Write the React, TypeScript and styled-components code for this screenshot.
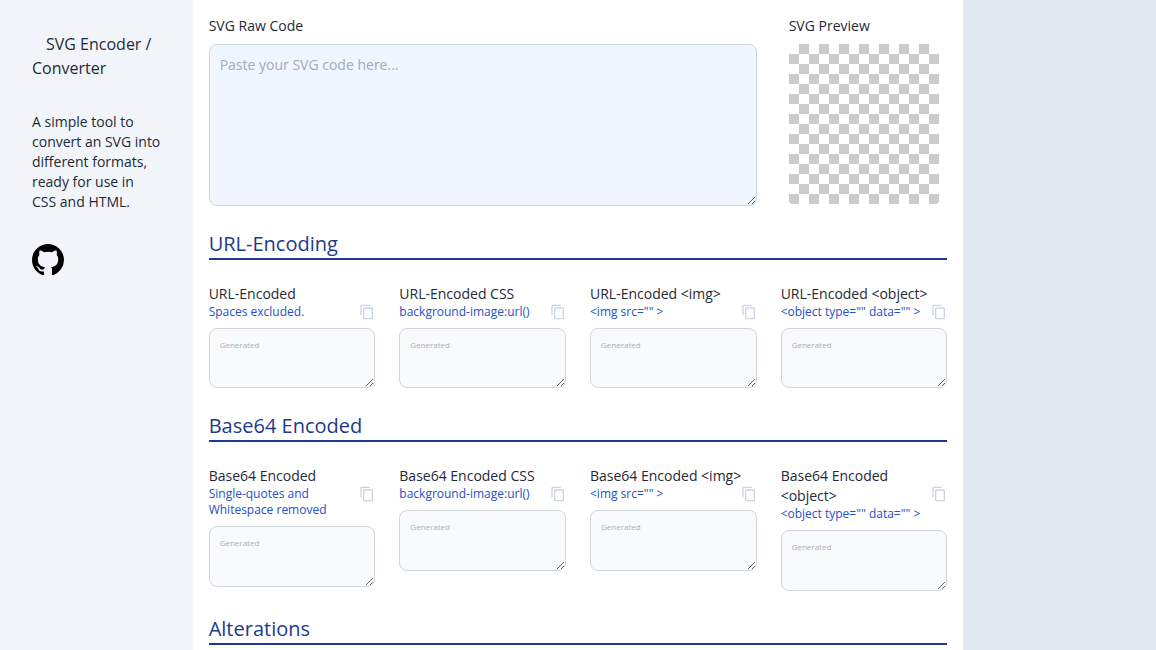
import React, { FunctionComponent } from 'react';
import styled, { createGlobalStyle } from 'styled-components';
import { MdOutlineContentCopy } from 'react-icons/md';

const GlobalStyle = createGlobalStyle`
	html, body {
		margin: 0;
		height: 100%;
		overflow: hidden;
	}
	body {
		font-family: 'Open Sans', 'Liberation Sans', sans-serif;
		color: #1f2937;
	}
	* {
		box-sizing: border-box;
	}
`;

const Page = styled.div`
	display: grid;
	grid-template-columns: 1fr 4fr 1fr;
	height: 650px;
	overflow: hidden;
	background: #e2e8f0;
`;
const Sidebar = styled.aside`
	background: #f1f5f9;
	padding: 32px;
`;
const AppTitle = styled.h1`
	margin: 0 0 32px;
	font-size: 16px;
	line-height: 24px;
	font-weight: 400;
	text-indent: 14px;
`;
const Intro = styled.p`
	margin: 0 0 32px;
	font-size: 14px;
	line-height: 20px;
`;
const GithubLink = styled.a`
	display: block;
	width: 32px;
	height: 32px;
	color: #000;
	line-height: 0;
`;
const Main = styled.main`
	background: #fff;
	padding: 16px;
`;
const Grid = styled.div`
	display: grid;
	grid-template-columns: repeat(4, 1fr);
	column-gap: 24px;
	align-items: start;
	margin-bottom: 24px;
`;
const RawField = styled.div`
	grid-column: span 3;
`;
const PreviewField = styled.div`
	padding-left: 8px;
`;
const Label = styled.label`
	display: block;
	font-size: 14px;
	line-height: 20px;
`;
const TopLabel = styled(Label)`
	margin-bottom: 8px;
`;
const RawInput = styled.textarea`
	display: block;
	width: 100%;
	height: 162px;
	padding: 10px;
	background: #eff6ff;
	border: 1px solid #cbd5e1;
	border-radius: 8px;
	font-family: inherit;
	font-size: 14px;
	line-height: 20px;

	&::placeholder {
		color: #a3aab5;
		opacity: 1;
	}
`;
const Preview = styled.div`
	width: 150px;
	height: 160px;
	border-radius: 4px;
	background-color: #fff;
	background-image: conic-gradient(#ccc 25%, #fff 0 50%, #ccc 0 75%, #fff 0);
	background-size: 20px 20px;
`;
const SectionTitle = styled.h2`
	margin: 0 0 24px;
	font-size: 20px;
	line-height: 28px;
	font-weight: 400;
	color: #1e3a8a;
	border-bottom: 2px solid #1e3a8a;
`;
const OutputCell = styled.div`
	position: relative;
`;
const Hint = styled.div`
	padding-right: 24px;
	margin-bottom: 8px;
	font-size: 12px;
	line-height: 16px;
	color: #2250c8;
`;
const CopyButton = styled.button`
	position: absolute;
	top: 20px;
	right: 0;
	width: 16px;
	height: 16px;
	padding: 0;
	border: 0;
	background: none;
	color: #cbd5e1;
	font-size: 16px;
	line-height: 0;
`;
const OutputBox = styled.textarea`
	display: block;
	width: 100%;
	height: 60.25px;
	padding: 10px;
	background: #f8fafc;
	border: 1px solid #d1d5db;
	border-radius: 8px;
	font-family: inherit;
	font-size: 8px;
	line-height: 12px;

	&::placeholder {
		color: #a9afb9;
		opacity: 1;
	}
`;

interface Output {
	label: string;
	hint: string;
}

const urlOutputs: Output[] = [
	{ label: 'URL-Encoded', hint: 'Spaces excluded.' },
	{ label: 'URL-Encoded CSS', hint: 'background-image:url()' },
	{ label: 'URL-Encoded <img>', hint: '<img src="" >' },
	{ label: 'URL-Encoded <object>', hint: '<object type="" data="" >' },
];

const base64Outputs: Output[] = [
	{ label: 'Base64 Encoded', hint: 'Single-quotes and Whitespace removed' },
	{ label: 'Base64 Encoded CSS', hint: 'background-image:url()' },
	{ label: 'Base64 Encoded <img>', hint: '<img src="" >' },
	{ label: 'Base64 Encoded <object>', hint: '<object type="" data="" >' },
];

const GithubMark: FunctionComponent = () => (
	<svg width="32" height="32" viewBox="0 0 16 16" fill="currentColor">
		<path d="M8 0C3.58 0 0 3.58 0 8c0 3.54 2.29 6.53 5.47 7.59.4.07.55-.17.55-.38 0-.19-.01-.82-.01-1.49-2.01.37-2.53-.49-2.69-.94-.09-.23-.48-.94-.82-1.13-.28-.15-.68-.52-.01-.53.63-.01 1.08.58 1.23.82.72 1.21 1.87.87 2.33.66.07-.52.28-.87.51-1.07-1.78-.2-3.64-.89-3.64-3.95 0-.87.31-1.59.82-2.15-.08-.2-.36-1.02.08-2.12 0 0 .67-.21 2.2.82.64-.18 1.32-.27 2-.27.68 0 1.36.09 2 .27 1.53-1.04 2.2-.82 2.2-.82.44 1.1.16 1.92.08 2.12.51.56.82 1.27.82 2.15 0 3.07-1.87 3.75-3.65 3.95.29.25.54.73.54 1.48 0 1.07-.01 1.93-.01 2.2 0 .21.15.46.55.38A8.013 8.013 0 0016 8c0-4.42-3.58-8-8-8z" />
	</svg>
);

const OutputField: FunctionComponent<Output> = ({ label, hint }) => (
	<OutputCell>
		<Label>{label}</Label>
		<Hint>{hint}</Hint>
		<CopyButton aria-label="Copy">
			<MdOutlineContentCopy />
		</CopyButton>
		<OutputBox placeholder="Generated" readOnly />
	</OutputCell>
);

const App: FunctionComponent = () => (
	<Page>
		<GlobalStyle />
		<Sidebar>
			<AppTitle>SVG Encoder / Converter</AppTitle>
			<Intro>A simple tool to convert an SVG into different formats, ready for use in CSS and HTML.</Intro>
			<GithubLink href="#">
				<GithubMark />
			</GithubLink>
		</Sidebar>
		<Main>
			<Grid>
				<RawField>
					<TopLabel>SVG Raw Code</TopLabel>
					<RawInput placeholder="Paste your SVG code here..." />
				</RawField>
				<PreviewField>
					<TopLabel>SVG Preview</TopLabel>
					<Preview />
				</PreviewField>
			</Grid>
			<SectionTitle>URL-Encoding</SectionTitle>
			<Grid>
				{urlOutputs.map((item) => (
					<OutputField key={item.label} {...item} />
				))}
			</Grid>
			<SectionTitle>Base64 Encoded</SectionTitle>
			<Grid>
				{base64Outputs.map((item) => (
					<OutputField key={item.label} {...item} />
				))}
			</Grid>
			<SectionTitle>Alterations</SectionTitle>
		</Main>
		<div />
	</Page>
);

export default App;
